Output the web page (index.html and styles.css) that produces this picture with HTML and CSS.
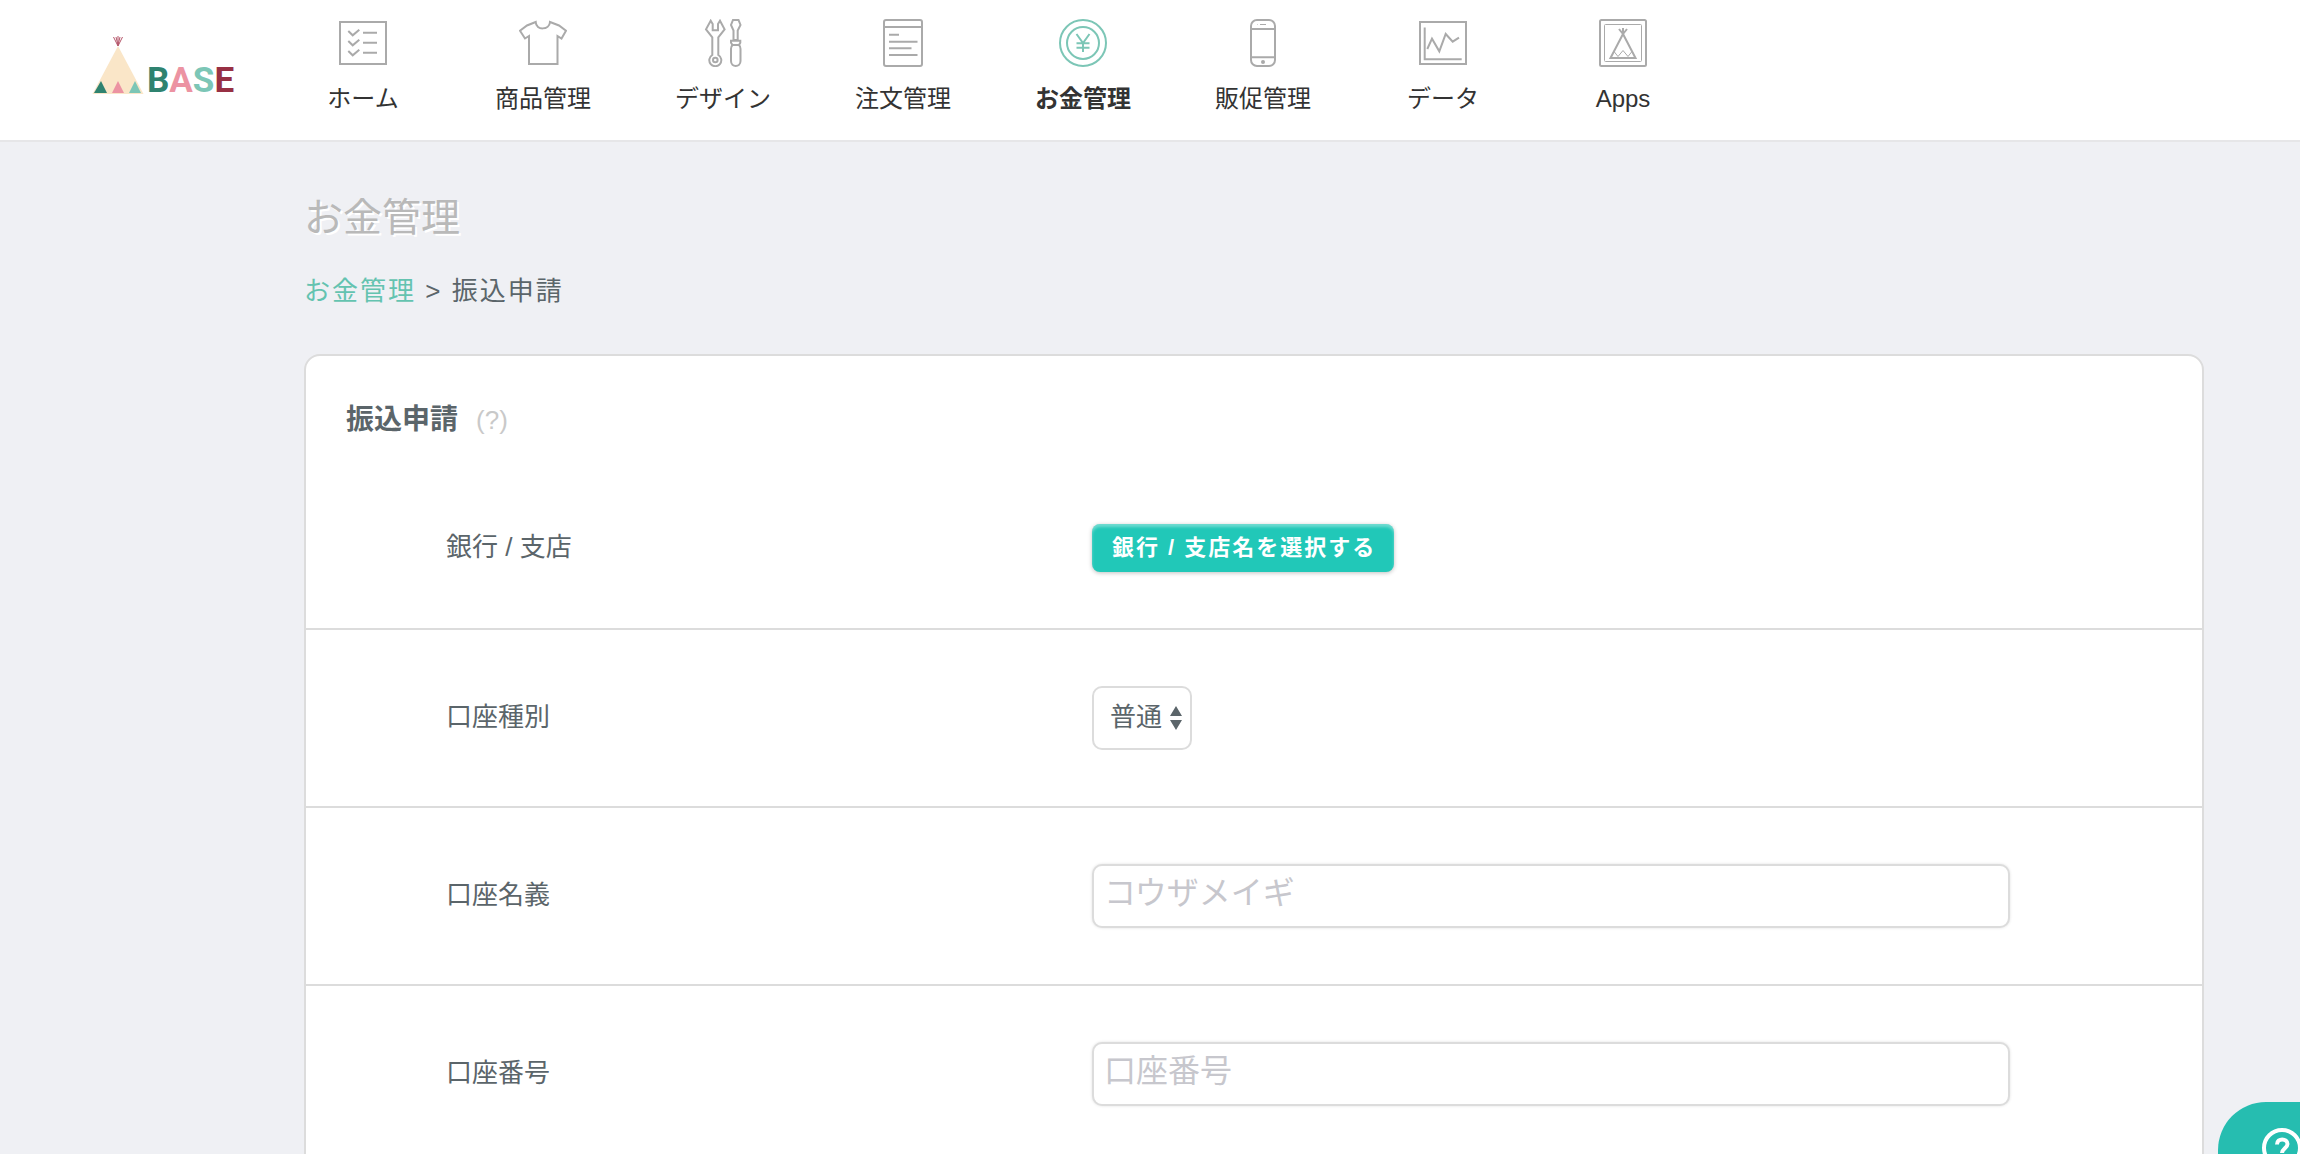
FILE: index.html
```html
<!DOCTYPE html>
<html lang="ja">
<head>
<meta charset="utf-8">
<meta name="viewport" content="width=device-width, initial-scale=1">
<title>振込申請 | BASE</title>
<link rel="stylesheet" href="styles.css">
</head>
<body>
<div class="page">
  <header class="header">
    <a class="logo" href="#" aria-label="BASE">
      <svg class="logo-mark" viewBox="0 0 52 58" aria-hidden="true">
        <path d="M26 10 51.500 58H.5z" fill="#fae6c8"/>
        <path d="M21.500 1 26 10l4.500-9M26 0v10M24 1l2 8 2-8" fill="none" stroke="#b5566a" stroke-width="1"/>
        <path d="M9 45l6 12H2z" fill="#2f8370"/>
        <path d="M26 45l6 12H20z" fill="#ec93a2"/>
        <path d="M43 45l6 12H37z" fill="#7cc6b6"/>
      </svg>
      <span class="logo-text"><span class="logo-b">B</span><span class="logo-a">A</span><span class="logo-s">S</span><span class="logo-e">E</span></span>
    </a>
    <nav class="nav">
      <a class="nav-item" href="#">
        <svg class="icon" viewBox="0 0 48 48"><path d="M1 3h46v42H1z"/><path d="M9.300 12l4.400 4.300 6.600-5.600M9.300 22l4.400 4.300 6.600-5.600M9.300 32l4.400 4.300 6.600-5.600M24 13.700h14M24 23.700h14M24 33.700h14"/></svg>
        <span>ホーム</span>
      </a>
      <a class="nav-item" href="#">
        <svg class="icon" viewBox="0 0 48 48"><path d="M16.700 3 8 6.500 1 11.700l5 7.800 4-2.500v28h28.500V17l4 2.500 4.500-7.800L40 6.500 31 3c-.5 8-14 9-14.300 0z"/></svg>
        <span>商品管理</span>
      </a>
      <a class="nav-item" href="#">
        <svg class="icon" viewBox="0 0 48 48"><path d="M11.700 1.700 7 10.300l6.300 8V36a6 6 0 1 0 6 0V18.300l6.300-8L21 1.700 19 5v6.300h-5.300V5z"/><circle cx="16.300" cy="41" r="2.300"/><path d="M34 1h5.500l2 5-2.800 5.500V21h-4.200V11.500L32 6zM32 21.700h9.300v2L40 26h-6.500L32 23.700z"/><path d="M33.500 26c-2 2-1.500 3-1.500 5v11c0 6.500 9.500 6.500 9.500 0V31c0-2 .5-3-1.500-5"/></svg>
        <span>デザイン</span>
      </a>
      <a class="nav-item" href="#">
        <svg class="icon" viewBox="0 0 48 48"><rect x="5" y="1" width="38" height="46" rx="2"/><path d="M5 8h38M10 15.700h10M10 22.700h28.500M10 29.300h22.500M10 36h28.500"/></svg>
        <span>注文管理</span>
      </a>
      <a class="nav-item nav-item-current" href="#" aria-current="page">
        <svg class="icon" viewBox="0 0 48 48"><circle cx="24" cy="24" r="23"/><circle cx="24" cy="24" r="16"/><path d="M17.500 15 24 24l6.500-9M24 24v9M17.500 24.200h13M17.500 28.800h13"/></svg>
        <span>お金管理</span>
      </a>
      <a class="nav-item" href="#">
        <svg class="icon" viewBox="0 0 48 48"><rect x="12" y="1" width="24" height="46" rx="6"/><path d="M12 10h24M12 38.300h24"/><path d="M21 5.500h6M18 5.500h.5" stroke-width="1"/><circle class="solid" cx="24" cy="43" r="2"/></svg>
        <span>販促管理</span>
      </a>
      <a class="nav-item" href="#">
        <svg class="icon" viewBox="0 0 48 48"><path d="M1 3h46v42H1z"/><path d="M5.700 8.500v31.800h37M8.300 30l4.700-10.300 7.300 12.600L26.700 15l7 7.700 6.300-4"/></svg>
        <span>データ</span>
      </a>
      <a class="nav-item" href="#">
        <svg class="icon" viewBox="0 0 48 48"><rect x="1" y="1" width="46" height="46" rx="1.500"/><rect x="5.500" y="5.500" width="37" height="37" rx="1" stroke-width="1"/><path d="M24 15 11.500 39h25z"/><path d="M24 15l-4-5M24 15V9M24 15l4-5"/><path d="M15 32.500l4 5 5-6 5 6 4-5" stroke-width="1"/></svg>
        <span>Apps</span>
      </a>
    </nav>
  </header>

  <main class="main">
    <h1 class="title">お金管理</h1>
    <nav class="breadcrumb" aria-label="breadcrumb"><a href="#">お金管理</a> &gt; 振込申請</nav>

    <form class="card">
      <div class="card-head">
        <h2 class="card-title">振込申請</h2>
        <a class="hint" href="#">(?)</a>
      </div>
      <div class="row">
        <span class="label" id="bank-label">銀行 / 支店</span>
        <div><button class="button" type="button" aria-describedby="bank-label">銀行 / 支店名を選択する</button></div>
      </div>
      <div class="row">
        <label class="label" for="kind">口座種別</label>
        <div class="select">
          <select class="field select-field" id="kind"><option>普通</option><option>当座</option></select>
          <svg class="select-arrows" viewBox="0 0 12 24" aria-hidden="true"><path d="M6 0l6 10H0zM6 24l6-10H0z"/></svg>
        </div>
      </div>
      <div class="row">
        <label class="label" for="holder">口座名義</label>
        <input class="field input" id="holder" type="text" placeholder="コウザメイギ">
      </div>
      <div class="row">
        <label class="label" for="number">口座番号</label>
        <input class="field input" id="number" type="text" placeholder="口座番号">
      </div>
    </form>
  </main>

  <button class="help" type="button" aria-label="ヘルプ">
    <svg viewBox="0 0 44 44" aria-hidden="true"><circle cx="22" cy="22" r="18"/><path d="M17 18.500c0-7 10.500-6.500 10.500-.5 0 4-5.500 4.500-5.500 9M22 30.500v3"/></svg>
  </button>
</div>
</body>
</html>
```
FILE: styles.css
```css
* {
  box-sizing: border-box;
}

body {
  margin: 0;
  background: #eff0f4;
  color: #5b656a;
  font-family: "Liberation Sans", "Noto Sans CJK JP", sans-serif;
  font-size: 26px;
}

a {
  color: inherit;
  text-decoration: none;
}

.page {
  height: 100vh;
  overflow: hidden;
}

/* Header */

.header {
  display: flex;
  background: #fff;
  border-bottom: 2px solid #e6e6e8;
  padding: 19px 0 25px 92px;
}

.logo {
  display: flex;
  align-items: flex-end;
  gap: 3px;
  width: 181px;
  height: 75px;
}

.logo-mark {
  width: 52px;
  height: 58px;
}

.logo-text {
  font-family: Roboto, "Liberation Sans", sans-serif;
  font-size: 35px;
  font-weight: bold;
  line-height: 26px;
}

.logo-b { color: #2f8370; }
.logo-a { color: #ec93a2; }
.logo-s { color: #7cc6b6; }
.logo-e { color: #983044; }

.nav {
  display: flex;
}

.nav-item {
  display: flex;
  flex-direction: column;
  align-items: center;
  gap: 16px;
  width: 180px;
  color: #333;
  font-size: 24px;
  line-height: 32px;
}

.nav-item-current {
  font-weight: bold;
}

.icon {
  width: 48px;
  height: 48px;
  fill: none;
  stroke: #aaa;
  stroke-width: 2;
}

.icon .solid {
  fill: #aaa;
  stroke: none;
}

.nav-item-current .icon {
  stroke: #7cc6b6;
}

/* Content */

.main {
  padding: 52px 96px 0 304px;
}

.title {
  margin: 0;
  color: #b9b9b9;
  font-size: 39px;
  font-weight: normal;
  line-height: 48px;
  text-shadow: 2px 2px 0 #fff;
}

.breadcrumb {
  padding: 29px 0 43px;
  letter-spacing: 2px;
  line-height: 40px;
}

.breadcrumb a {
  color: #64c3b0;
}

.card {
  padding-bottom: 80px;
  background: #fff;
  border: 2px solid #dcdcdc;
  border-radius: 16px;
}

.card-head {
  display: flex;
  align-items: center;
  gap: 18px;
  padding: 44px 40px 28px;
  line-height: 40px;
}

.card-title {
  margin: 0;
  font-size: 28px;
}

.hint {
  color: #c9c9c9;
}

.row {
  display: grid;
  grid-template-columns: 646fr 918fr;
  align-items: center;
  padding: 56px 192px 56px 140px;
}

.row + .row {
  border-top: 2px solid #dcdcdc;
}

.label {
  padding-bottom: 2px;
  line-height: 46px;
}

.button {
  display: block;
  height: 48px;
  padding: 0 18px 6px 20px;
  border: 0;
  border-radius: 8px;
  background: #21c8b8;
  box-shadow: 0 1px 4px rgba(0, 0, 0, 0.25), inset 0 3px 3px rgba(255, 255, 255, 0.35);
  color: #fff;
  font-family: inherit;
  font-size: 22px;
  font-weight: bold;
  letter-spacing: 2px;
}

.field {
  height: 64px;
  border: 2px solid #dcdcdc;
  border-radius: 10px;
  background: #fff;
  color: #5b656a;
  font-family: inherit;
}

.select {
  display: flex;
  align-items: center;
}

.select-field {
  width: 100px;
  padding: 0 26px 2px 16px;
  appearance: none;
  font-size: 26px;
}

.select-arrows {
  width: 12px;
  height: 24px;
  margin-left: -22px;
  fill: #5b656a;
  pointer-events: none;
}

.input {
  width: 100%;
  padding: 0 10px 6px;
  box-shadow: 0 0 3px rgba(0, 0, 0, 0.12);
  font-size: 32px;
}

.input::placeholder {
  color: #c7c7cd;
  opacity: 1;
}

/* Help launcher pinned to the corner */

.help {
  position: fixed;
  right: 0;
  bottom: 0;
  width: 82px;
  height: 52px;
  padding: 24px 0 0 42px;
  border: 0;
  border-radius: 48px 0 0 0;
  background: #26bdb0;
  overflow: hidden;
}

.help svg {
  display: block;
  width: 44px;
  height: 44px;
  fill: none;
  stroke: #fff;
  stroke-width: 4;
}
```
